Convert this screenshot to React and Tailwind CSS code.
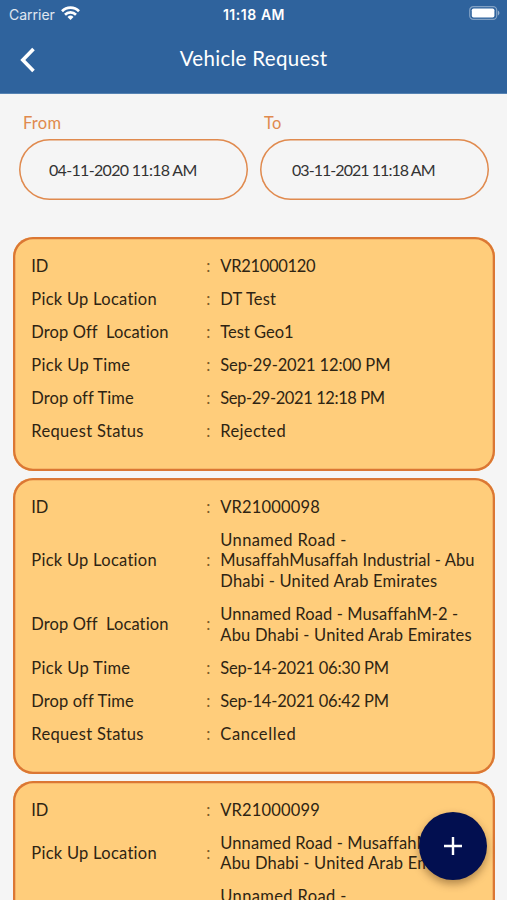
import { useState } from 'react'

const initialRequests = [
  {
    id: 'VR21000120',
    pickUp: ['DT Test'],
    dropOff: ['Test Geo1'],
    pickUpTime: 'Sep-29-2021 12:00 PM',
    dropOffTime: 'Sep-29-2021 12:18 PM',
    status: 'Rejected',
  },
  {
    id: 'VR21000098',
    pickUp: ['Unnamed Road -', 'MusaffahMusaffah Industrial - Abu', 'Dhabi - United Arab Emirates'],
    dropOff: ['Unnamed Road - MusaffahM-2 -', 'Abu Dhabi - United Arab Emirates'],
    pickUpTime: 'Sep-14-2021 06:30 PM',
    dropOffTime: 'Sep-14-2021 06:42 PM',
    status: 'Cancelled',
  },
  {
    id: 'VR21000099',
    pickUp: ['Unnamed Road - MusaffahM-2 -', 'Abu Dhabi - United Arab Emirates'],
    dropOff: ['Unnamed Road -', 'MusaffahMusaffah Industrial - Abu', 'Dhabi - United Arab Emirates'],
  },
]

// letter spacing per text, default is tracking-[0.2px]
const tracking = {
  ID: 'tracking-[-0.2px]',
  'Pick Up Location': 'tracking-[0.27px]',
  'Drop Off  Location': 'tracking-[0.1px]',
  'Pick Up Time': 'tracking-[0.33px]',
  'Drop off Time': 'tracking-[0.12px]',
  'Request Status': 'tracking-[0.34px]',
  VR21000120: 'tracking-[-0.3px]',
  VR21000098: 'tracking-[0.15px]',
  VR21000099: 'tracking-[0.15px]',
  'Test Geo1': 'tracking-[0px]',
  'Sep-29-2021 12:00 PM': 'tracking-[-0.13px]',
  'Sep-29-2021 12:18 PM': 'tracking-[-0.41px]',
  'Sep-14-2021 06:30 PM': 'tracking-[-0.2px]',
  'Sep-14-2021 06:42 PM': 'tracking-[-0.2px]',
  Rejected: 'tracking-[0.35px]',
  Cancelled: 'tracking-[0.6px]',
  'Unnamed Road -': 'tracking-[0.38px]',
  'MusaffahMusaffah Industrial - Abu': 'tracking-[0.07px]',
  'Unnamed Road - MusaffahM-2 -': 'tracking-[0.1px]',
}

function StatusBar() {
  return (
    <div className="grid h-7 grid-cols-3 items-center pl-[9px] pr-[7px] font-['Inter',sans-serif] text-[14px]">
      <div className="flex items-center gap-1.5">
        <span className="text-white/85">Carrier</span>
        <svg className="mb-0.5" width="19" height="14" viewBox="0 0 19 14" fill="none" stroke="white" strokeWidth="2.7">
          <path d="M1 5.2a12 12 0 0 1 17 0" />
          <path d="M4 8.7a7.8 7.8 0 0 1 11 0" />
          <path d="M9.5 14 6.5 10.9a4.3 4.3 0 0 1 6 0Z" fill="white" stroke="none" />
        </svg>
      </div>
      <span className="pr-px text-center font-semibold tracking-[0.55px] whitespace-nowrap">11:18 AM</span>
      <svg className="mb-0.5 justify-self-end" width="31" height="14" viewBox="0 0 31 14">
        <rect x="0.7" y="0.7" width="27" height="12.6" rx="3.6" fill="none" stroke="white" strokeOpacity="0.4" strokeWidth="1.2" />
        <rect x="2.8" y="2.5" width="22.6" height="9" rx="1.8" fill="white" />
        <path d="M28.9 4.6c2 .8 2 4 0 4.8Z" fill="white" fillOpacity="0.5" />
      </svg>
    </div>
  )
}

function DateField({ label, value, className }) {
  return (
    <label className="block w-[229px]">
      <span className="block pl-1 text-[16.5px] leading-[22px] tracking-[0.25px] text-[#e08a4e]">{label}</span>
      <button
        className={`mt-[5px] flex h-[61px] w-full items-center rounded-full text-[16px] text-[#333] shadow-[inset_0_0_0_1.5px_#e08a4e] ${className}`}
      >
        {value}
      </button>
    </label>
  )
}

function Row({ label, value }) {
  if (!value) return null
  const lines = Array.isArray(value) ? value : [value]
  return (
    <div className="flex min-h-[33px] items-center py-1.5 text-[16.5px] leading-[20.8px]">
      <span className={`w-[175px] whitespace-pre ${tracking[label] || 'tracking-[0.2px]'}`}>{label}</span>
      <span className="w-[14px] text-[#7a5a28]">:</span>
      <div className="whitespace-nowrap">
        {lines.map((line) => (
          <div key={line} className={tracking[line] || 'tracking-[0.2px]'}>
            {line}
          </div>
        ))}
      </div>
    </div>
  )
}

function RequestCard({ request }) {
  return (
    <div className="shrink-0 rounded-[20px] bg-[#ffcd7b] pt-[12.6px] pb-[23.4px] pl-[18.3px] text-[#2e2413] shadow-[inset_0_0_0_2.3px_#db7734]">
      <Row label="ID" value={request.id} />
      <Row label="Pick Up Location" value={request.pickUp} />
      <Row label="Drop Off  Location" value={request.dropOff} />
      <Row label="Pick Up Time" value={request.pickUpTime} />
      <Row label="Drop off Time" value={request.dropOffTime} />
      <Row label="Request Status" value={request.status} />
    </div>
  )
}

export default function App() {
  const [requests] = useState(initialRequests)

  return (
    <div className="relative flex h-[900px] w-[507px] flex-col overflow-hidden bg-[#f5f5f5] font-['Lato',sans-serif]">
      <header className="h-[94px] shrink-0 border-b border-[#5683b3] bg-[#2f639d] text-white">
        <StatusBar />
        <div className="grid h-[62px] grid-cols-[60px_1fr_60px] items-center">
          <button className="pt-px pl-5" aria-label="Back">
            <svg width="16" height="26" viewBox="0 0 16 26" fill="none" stroke="white" strokeWidth="3.6">
              <path d="M13.5 2 2.8 13l10.7 11" />
            </svg>
          </button>
          <h1 className="pb-px text-center text-[20.5px] tracking-[0.3px]">Vehicle Request</h1>
        </div>
      </header>

      <div className="flex shrink-0 gap-3 pt-[18px] pl-[19px]">
        <DateField label="From" value="04-11-2020 11:18 AM" className="pl-[30px] tracking-[-0.68px]" />
        <DateField label="To" value="03-11-2021 11:18 AM" className="pl-[32px] tracking-[-0.95px]" />
      </div>

      <main className="mt-[37px] flex flex-col gap-[7px] pr-3 pl-[13px]">
        {requests.map((request) => (
          <RequestCard key={request.id} request={request} />
        ))}
      </main>

      <button
        className="absolute top-[812px] left-[419px] flex size-[68px] items-center justify-center rounded-full bg-[#020f50] shadow-[0_4px_8px_rgba(60,30,0,0.4)]"
        aria-label="Add request"
      >
        <svg width="18" height="18" viewBox="0 0 18 18" stroke="white" strokeWidth="2.4">
          <path d="M9 0v18M0 9h18" />
        </svg>
      </button>
    </div>
  )
}
